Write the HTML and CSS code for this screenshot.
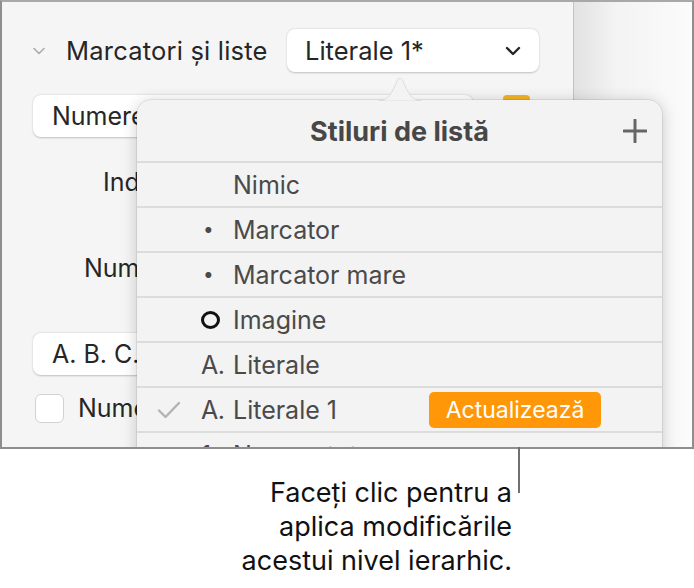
FILE: index.html
```html
<!DOCTYPE html>
<html lang="ro">
<head>
<meta charset="utf-8">
<title>Stiluri de listă</title>
<link rel="stylesheet" href="styles.css">
</head>
<body>
<div class="page">
  <div class="frame">
    <div class="sidebar">
      <div class="head-row">
        <svg class="disclosure" width="12" height="8" viewBox="0 0 12 8"><path d="M1 1.5 L6 6.5 L11 1.5" fill="none" stroke="#ababab" stroke-width="1.6" stroke-linecap="round" stroke-linejoin="round"/></svg>
        <span class="section-label">Marcatori și liste</span>
        <div class="popup">
          <span>Literale 1*</span>
          <svg width="16" height="10" viewBox="0 0 16 10"><path d="M2 2 L8 8 L14 2" fill="none" stroke="#262626" stroke-width="2.4" stroke-linecap="round" stroke-linejoin="round"/></svg>
        </div>
      </div>
      <div class="field-row">
        <div class="field field-wide">Numerele și textul</div>
        <div class="swatch"></div>
      </div>
      <div class="label-row label-ind"><span class="row-label">Indentări:</span></div>
      <div class="label-row label-num"><span class="row-label">Numerotare:</span></div>
      <div class="field-row abc-row">
        <div class="field field-abc">A. B. C. D.</div>
      </div>
      <div class="check-row">
        <span class="checkbox"></span>
        <span class="check-label">Numerotare ierarhică</span>
      </div>
    </div>
    <div class="canvas"></div>

    <div class="popover">
      <svg class="arrow" width="44" height="26" viewBox="0 0 44 26"><path d="M0 26 C 10 26 14 18 19 6 Q 22 0 25 6 C 30 18 34 26 44 26 Z" fill="#f3f3f3" stroke="#d6d6d6" stroke-width="0.8"/></svg>
      <div class="pop-head">
        <span class="pop-title">Stiluri de listă</span>
        <svg class="plus" width="24" height="24" viewBox="0 0 24 24"><path d="M12 1 V23 M1 12 H23" stroke="#666" stroke-width="3" stroke-linecap="round"/></svg>
      </div>
      <div class="item"><span class="check"></span><span class="marker"></span><span class="name">Nimic</span></div>
      <div class="item"><span class="check"></span><span class="marker bullet">•</span><span class="name">Marcator</span></div>
      <div class="item"><span class="check"></span><span class="marker bullet">•</span><span class="name">Marcator mare</span></div>
      <div class="item"><span class="check"></span><span class="marker"><span class="ring"></span></span><span class="name">Imagine</span></div>
      <div class="item"><span class="check"></span><span class="marker">A.</span><span class="name">Literale</span></div>
      <div class="item current">
        <span class="check"><svg width="24" height="18" viewBox="0 0 24 18"><path d="M2 9.5 L8.5 16 L22 2" fill="none" stroke="#b3b3b3" stroke-width="2.4" stroke-linecap="round" stroke-linejoin="round"/></svg></span>
        <span class="marker">A.</span><span class="name">Literale 1</span>
        <span class="update">Actualizează</span>
      </div>
      <div class="item"><span class="check"></span><span class="marker">1.</span><span class="name">Numerotat</span></div>
    </div>
  </div>
  <div class="callout-line"></div>
  <p class="callout">Faceți clic pentru a<br>aplica modificările<br>acestui nivel ierarhic.</p>
</div>
</body>
</html>
```
FILE: styles.css
```css
html, body {
  margin: 0;
  padding: 0;
  background: #ffffff;
}

body {
  font-family: "Inter", "Liberation Sans", sans-serif;
  color: #262626;
}

.page {
  position: relative;
  width: 694px;
  height: 588px;
}

.frame {
  position: relative;
  box-sizing: border-box;
  width: 694px;
  height: 449px;
  border: 2px solid #8e8e8e;
  border-top-color: #a8a8a8;
  display: flex;
  overflow: hidden;
}

.sidebar {
  width: 572px;
  flex: none;
  background: #f5f5f5;
  border-right: 1px solid #c4c4c4;
  box-sizing: border-box;
  display: flex;
  flex-direction: column;
}

.canvas {
  flex: 1;
  background: linear-gradient(to right, #e2e2e2 0%, #f3f3f3 35%, #fbfbfb 100%);
}

.head-row {
  display: flex;
  align-items: center;
  margin-top: 27px;
  height: 43px;
  padding-left: 31px;
}

.disclosure {
  flex: none;
  margin-right: 21px;
}

.section-label {
  font-size: 25.5px;
  letter-spacing: 0.2px;
  width: 221px;
  white-space: nowrap;
}

.popup {
  box-sizing: border-box;
  width: 252px;
  height: 43px;
  background: #ffffff;
  border-radius: 8px;
  box-shadow: 0 0.5px 2px rgba(0, 0, 0, 0.22);
  display: flex;
  align-items: center;
  justify-content: space-between;
  padding: 0 18px 0 18px;
  font-size: 25.5px;
}

.field-row {
  display: flex;
  align-items: flex-start;
  padding-left: 31px;
}

.field-row:nth-child(2) {
  margin-top: 23px;
}

.field {
  box-sizing: border-box;
  height: 42px;
  background: #ffffff;
  border-radius: 8px;
  box-shadow: 0 0.5px 2px rgba(0, 0, 0, 0.22);
  display: flex;
  align-items: center;
  padding-left: 19px;
  font-size: 25px;
  white-space: nowrap;
}

.field-wide {
  width: 440px;
}

.swatch {
  width: 27px;
  height: 8px;
  margin-left: 30px;
  border-radius: 4px 4px 0 0;
  background: #f4b323;
}

.label-row {
  display: flex;
  font-size: 25px;
}

.label-ind {
  margin-top: 30px;
  padding-left: 101px;
}

.label-num {
  margin-top: 56px;
  padding-left: 82px;
}

.abc-row {
  margin-top: 50px;
}

.field-abc {
  width: 200px;
}

.check-row {
  display: flex;
  align-items: center;
  margin-top: 18px;
  padding-left: 33px;
}

.checkbox {
  box-sizing: border-box;
  width: 29px;
  height: 29px;
  border-radius: 6px;
  background: #ffffff;
  border: 1px solid #d2d2d2;
  margin-right: 14px;
}

.check-label {
  font-size: 25px;
  white-space: nowrap;
}

/* popover */
.popover {
  position: absolute;
  z-index: 5;
  left: 135px;
  top: 98px;
  width: 525px;
  height: 420px;
  background-color: #f3f3f3;
  border-radius: 14px;
  box-shadow: 0 0 0 0.5px rgba(0, 0, 0, 0.14), 0 2px 16px rgba(0, 0, 0, 0.2);
  color: #4a4a4a;
}

.arrow {
  position: absolute;
  left: 241px;
  top: -25px;
}

.pop-head {
  position: relative;
  height: 61px;
  display: flex;
  align-items: center;
  justify-content: center;
}

.pop-title {
  font-size: 27px;
  font-weight: 700;
  color: #474747;
  margin-top: 1px;
}

.plus {
  position: absolute;
  right: 15px;
  top: 19px;
}

.item {
  box-sizing: border-box;
  height: 45px;
  border-top: 2px solid #dcdcdc;
  display: flex;
  align-items: center;
  font-size: 25px;
  padding-right: 61px;
}

.check {
  width: 64px;
  flex: none;
  display: flex;
  padding-left: 20px;
  box-sizing: border-box;
}

.marker {
  width: 32px;
  flex: none;
  display: flex;
  align-items: center;
  letter-spacing: -0.5px;
}

.bullet {
  padding-left: 2px;
  box-sizing: border-box;
  font-size: 19px;
}

.ring {
  box-sizing: border-box;
  width: 19px;
  height: 18px;
  border: 3px solid #111;
  border-radius: 50%;
}

.name {
  white-space: nowrap;
}

.update {
  margin-left: auto;
  width: 172px;
  height: 36px;
  border-radius: 5px;
  background: #ff9708;
  color: #ffffff;
  display: flex;
  align-items: center;
  justify-content: center;
  font-size: 23px;
}

.callout-line {
  position: absolute;
  left: 518px;
  top: 429px;
  width: 2px;
  height: 64px;
  background: #707070;
}

.callout {
  margin: 0;
  width: 512px;
  padding-top: 27px;
  text-align: right;
  font-size: 27px;
  line-height: 34px;
  color: #111;
}
```
